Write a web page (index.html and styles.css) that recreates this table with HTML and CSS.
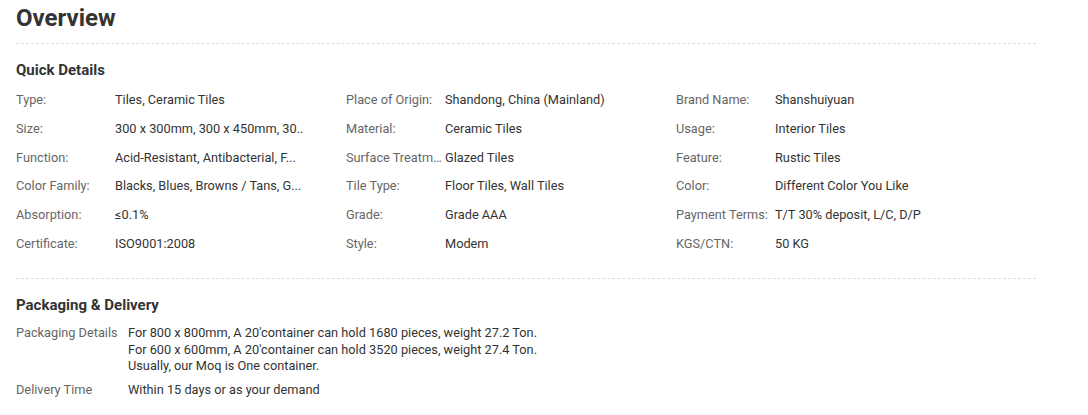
FILE: index.html
```html
<!DOCTYPE html>
<html>
<head>
<meta charset="utf-8">
<link rel="stylesheet" href="styles.css">
</head>
<body>
<div class="page">
  <h1 class="title">Overview</h1>
  <section class="section quick">
    <h2 class="section-title">Quick Details</h2>
    <div class="grid">
      <div class="item"><span class="label">Type:</span><span class="value">Tiles, Ceramic Tiles</span></div>
      <div class="item"><span class="label">Place of Origin:</span><span class="value">Shandong, China (Mainland)</span></div>
      <div class="item"><span class="label">Brand Name:</span><span class="value">Shanshuiyuan</span></div>
      <div class="item"><span class="label">Size:</span><span class="value">300 x 300mm, 300 x 450mm, 30...</span></div>
      <div class="item"><span class="label">Material:</span><span class="value">Ceramic Tiles</span></div>
      <div class="item"><span class="label">Usage:</span><span class="value">Interior Tiles</span></div>
      <div class="item"><span class="label">Function:</span><span class="value">Acid-Resistant, Antibacterial, F...</span></div>
      <div class="item"><span class="label">Surface Treatment:</span><span class="value">Glazed Tiles</span></div>
      <div class="item"><span class="label">Feature:</span><span class="value">Rustic Tiles</span></div>
      <div class="item"><span class="label">Color Family:</span><span class="value">Blacks, Blues, Browns / Tans, G...</span></div>
      <div class="item"><span class="label">Tile Type:</span><span class="value">Floor Tiles, Wall Tiles</span></div>
      <div class="item"><span class="label">Color:</span><span class="value">Different Color You Like</span></div>
      <div class="item"><span class="label">Absorption:</span><span class="value">≤0.1%</span></div>
      <div class="item"><span class="label">Grade:</span><span class="value">Grade AAA</span></div>
      <div class="item"><span class="label">Payment Terms:</span><span class="value">T/T 30% deposit, L/C, D/P</span></div>
      <div class="item"><span class="label">Certificate:</span><span class="value">ISO9001:2008</span></div>
      <div class="item"><span class="label">Style:</span><span class="value">Modem</span></div>
      <div class="item"><span class="label">KGS/CTN:</span><span class="value">50 KG</span></div>
    </div>
  </section>
  <section class="section packaging">
    <h2 class="section-title">Packaging &amp; Delivery</h2>
    <div class="pack-row">
      <span class="pack-label">Packaging Details</span>
      <span class="pack-value">For 800 x 800mm, A 20'container can hold 1680 pieces, weight 27.2 Ton.<br>For 600 x 600mm, A 20'container can hold 3520 pieces, weight 27.4 Ton.<br>Usually, our Moq is One container.</span>
    </div>
    <div class="pack-row">
      <span class="pack-label">Delivery Time</span>
      <span class="pack-value">Within 15 days or as your demand</span>
    </div>
  </section>
</div>
</body>
</html>
```

FILE: styles.css
```css
html, body {
  margin: 0;
  padding: 0;
  background: #fff;
}
body {
  font-family: Roboto, "Liberation Sans", Arial, sans-serif;
  color: #333;
}
.page {
  width: 1020px;
  padding: 0 0 0 16px;
}
.title {
  margin: 0;
  font-size: 24px;
  font-weight: 700;
  line-height: 36px;
  color: #333;
  padding-bottom: 7px;
  border-bottom: 1px dashed #ddd;
}
.section {
  padding-top: 14px;
}
.section-title {
  margin: 0;
  font-size: 15px;
  font-weight: 700;
  line-height: 24px;
  color: #333;
}
.quick {
  padding-bottom: 20px;
  border-bottom: 1px dashed #ddd;
}
.grid {
  display: grid;
  grid-template-columns: 330px 330px 330px;
  grid-auto-rows: 28.7px;
  padding-top: 4px;
}
.item {
  display: flex;
  align-items: center;
  font-size: 12.75px;
  line-height: 16px;
  min-width: 0;
}
.label {
  width: 99px;
  flex: none;
  color: #666;
  white-space: nowrap;
  overflow: hidden;
  text-overflow: ellipsis;
}
.value {
  width: 188px;
  color: #333;
  white-space: nowrap;
  overflow: hidden;
}
.packaging {
  padding-top: 14px;
}
.packaging .section-title {
  margin-bottom: 8px;
}
.pack-row {
  display: flex;
  font-size: 12.75px;
  line-height: 16.5px;
  margin-bottom: 7.5px;
}
.pack-label {
  width: 112px;
  flex: none;
  color: #666;
}
.pack-value {
  color: #333;
}
```
